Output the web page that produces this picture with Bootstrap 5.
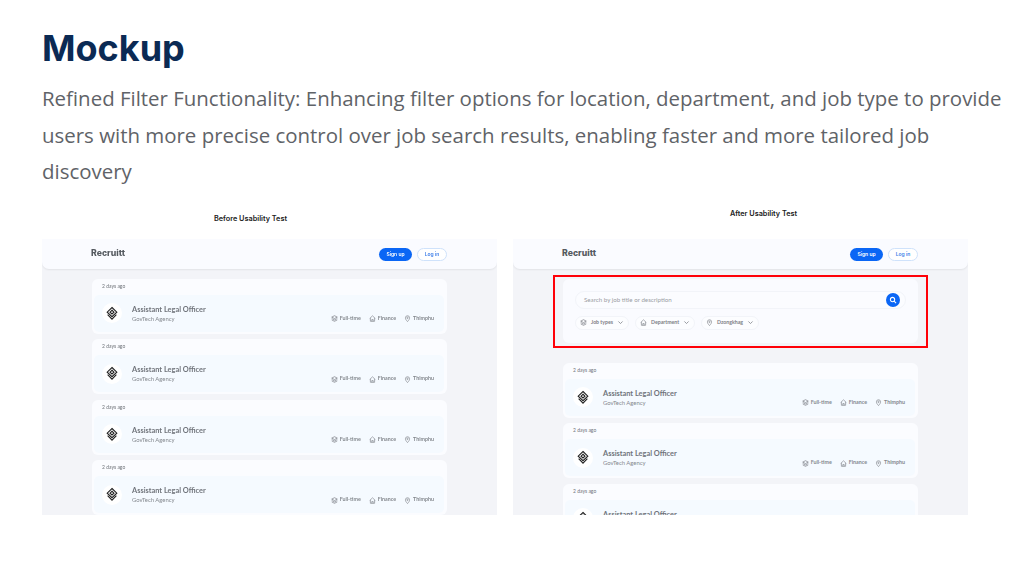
<!DOCTYPE html>
<html lang="en">
<head>
  <meta charset="UTF-8">
  <title>Mockup</title>
  <link href="https://cdn.jsdelivr.net/npm/bootstrap@5.3.3/dist/css/bootstrap.min.css" rel="stylesheet">
  <style>
    body {
      background: #fff;
      padding: 25px 10px 0 42px;
      overflow: hidden;
    }
    .page-title {
      font-family: Inter, sans-serif;
      font-weight: 700;
      font-size: 36px;
      line-height: 46px;
      color: #0b2a54;
      margin: 0 0 9px;
    }
    .page-text {
      font-family: "Open Sans", sans-serif;
      font-size: 20.45px;
      line-height: 36.5px;
      color: #5f6368;
      margin: 0;
    }
    .mock-row {
      gap: 16px;
      width: 926px;
    }
    .mock-col {
      width: 455px;
      font-family: Lato, sans-serif;
    }
    .mock-cap {
      font-family: Inter, sans-serif;
      font-size: 7.3px;
      font-weight: 600;
      color: #222;
      text-align: center;
      line-height: 12px;
    }
    .cap-before { margin-top: 23px; margin-bottom: 14px; padding-right: 38px; }
    .cap-after { margin-top: 18px; margin-bottom: 19px; padding-left: 46px; }
    .mock-panel {
      height: 276px;
      background: #f3f4f8;
      overflow: hidden;
      filter: blur(.35px);
    }
    .mock-nav {
      height: 30px;
      background: #fafbff;
      border-radius: 0 0 7px 7px;
      box-shadow: 0 1px 2px rgba(0, 0, 0, .07);
      padding: 1px 50px 0 49px;
    }
    .mock-brand {
      font-family: Inter, sans-serif;
      font-size: 8.7px;
      font-weight: 800;
      color: #555a60;
    }
    .nav-btns {
      gap: 5px;
    }
    .btn-sign, .btn-log {
      font-family: Inter, sans-serif;
      font-size: 5px;
      font-weight: 600;
      height: 13px;
      border-radius: 7px;
      line-height: 13px;
      text-align: center;
    }
    .btn-sign { width: 33px; background: #0a66f5; color: #fff; }
    .btn-log { width: 30px; background: #fff; color: #3f7fe8; border: 1px solid #cfe2fb; line-height: 11px; }
    .job-list {
      padding: 10px 50px 0;
      gap: 5.5px;
    }
    .after-list { padding-top: 15px; }
    .job-card {
      height: 55px;
      flex: none;
      background: #fbfcff;
      border-radius: 6px;
      padding: 0 3px 2px 2px;
    }
    .job-age {
      font-size: 5px;
      color: #70747a;
      height: 16px;
      line-height: 15px;
      padding-left: 8px;
    }
    .job-body {
      height: 37px;
      background: #f5faff;
      border-radius: 5px;
      padding: 0 10px 0 8px;
    }
    .job-logo {
      width: 20px;
      height: 20px;
      background: #fff;
      border-radius: 50%;
    }
    .job-text {
      padding-left: 10px;
    }
    .job-title {
      font-size: 7.4px;
      font-weight: 700;
      color: #70747b;
      line-height: 9px;
      margin-top: 1px;
    }
    .job-org {
      font-size: 5.9px;
      color: #84888e;
      line-height: 9px;
    }
    .job-metas {
      gap: 8px;
      align-self: flex-end;
      padding-bottom: 9px;
    }
    .job-meta {
      font-size: 5.3px;
      font-weight: 700;
      color: #84888e;
      gap: 2px;
    }
    .red-box {
      margin: 6px 40px 0;
      height: 73px;
      border: 2px solid #ff0008;
      padding: 2px 8px 3px;
    }
    .search-card {
      height: 100%;
      background: #fafbff;
      border-radius: 6px;
      padding: 12px 12px 0;
    }
    .search-bar {
      height: 18px;
      background: #fbfcff;
      border: 1px solid #f2f4f9;
      border-radius: 9px;
      padding: 0 5px 0 8px;
      font-size: 6.2px;
      color: #9a9da3;
    }
    .search-go {
      width: 14px;
      height: 14px;
      background: #0a66f5;
      border-radius: 50%;
    }
    .chip-row {
      gap: 6px;
      margin-top: 7px;
    }
    .filter-chip {
      height: 14px;
      background: #fcfdff;
      border: 1px solid #f2f4f9;
      border-radius: 7px;
      padding: 0 4px;
      font-size: 5.2px;
      font-weight: 700;
      color: #7c8086;
      gap: 4px;
    }
  </style>
</head>
<body>
  <svg width="0" height="0" class="position-absolute">
    <symbol id="ico-logo" viewBox="0 0 14 16">
      <g fill="none" stroke="#222" stroke-width="1.3">
        <path d="M7 1 12.6 6.4 7 11.8 1.4 6.4Z"/>
        <path d="M1.9 9.4 7 14.7 12.1 9.4"/>
        <path d="M7 4.2 9.3 6.4 7 8.6 4.7 6.4Z"/>
      </g>
    </symbol>
    <symbol id="ico-stack" viewBox="0 0 10 10">
      <g fill="none" stroke="#7c8086" stroke-width="1">
        <path d="M5 1 9 3 5 5 1 3Z"/>
        <path d="M1 5 5 7 9 5M1 7 5 9 9 7"/>
      </g>
    </symbol>
    <symbol id="ico-house" viewBox="0 0 10 10">
      <path d="M1 5 5 1.2 9 5M2 4.2V9H8V4.2M4 9V6.5H6V9" fill="none" stroke="#7c8086" stroke-width=".9"/>
    </symbol>
    <symbol id="ico-pin" viewBox="0 0 10 10">
      <g fill="none" stroke="#7c8086" stroke-width=".9">
        <path d="M5 9.4C3.2 7.4 2 5.9 2 4.1A3 3 0 0 1 8 4.1C8 5.9 6.8 7.4 5 9.4Z"/>
        <circle cx="5" cy="4.1" r="1"/>
      </g>
    </symbol>
    <symbol id="ico-down" viewBox="0 0 10 10">
      <path d="M2 3.5 5 6.5 8 3.5" fill="none" stroke="#7c8086" stroke-width="1.1"/>
    </symbol>
    <symbol id="ico-search" viewBox="0 0 10 10">
      <g fill="none" stroke="#fff" stroke-width="1.3">
        <circle cx="4.4" cy="4.4" r="2.7"/>
        <path d="M6.4 6.4 8.8 8.8"/>
      </g>
    </symbol>
  </svg>

  <h1 class="page-title">Mockup</h1>
  <p class="page-text">Refined Filter Functionality: Enhancing filter options for location, department, and job type to provide users with more precise control over job search results, enabling faster and more tailored job discovery</p>

  <div class="d-flex mock-row">
    <div class="mock-col">
      <div class="mock-cap cap-before">Before Usability Test</div>
      <div class="mock-panel">
        <div class="mock-nav d-flex align-items-center justify-content-between">
          <span class="mock-brand">Recruitt</span>
          <div class="nav-btns d-flex align-items-center"><span class="btn-sign">Sign up</span><span class="btn-log">Log in</span></div>
        </div>
        <div class="job-list d-flex flex-column" data-jobs="4"></div>
      </div>
    </div>

    <div class="mock-col">
      <div class="mock-cap cap-after">After Usability Test</div>
      <div class="mock-panel">
        <div class="mock-nav d-flex align-items-center justify-content-between">
          <span class="mock-brand">Recruitt</span>
          <div class="nav-btns d-flex align-items-center"><span class="btn-sign">Sign up</span><span class="btn-log">Log in</span></div>
        </div>
        <div class="red-box">
          <div class="search-card">
            <div class="search-bar d-flex align-items-center justify-content-between">
              <span>Search by job title or description</span>
              <span class="search-go d-flex align-items-center justify-content-center"><svg width="8" height="8"><use href="#ico-search"/></svg></span>
            </div>
            <div class="chip-row d-flex">
              <span class="filter-chip d-flex align-items-center"><svg width="7" height="7"><use href="#ico-stack"/></svg>Job types<svg width="7" height="7"><use href="#ico-down"/></svg></span>
              <span class="filter-chip d-flex align-items-center"><svg width="7" height="7"><use href="#ico-house"/></svg>Department<svg width="7" height="7"><use href="#ico-down"/></svg></span>
              <span class="filter-chip d-flex align-items-center"><svg width="7" height="7"><use href="#ico-pin"/></svg>Dzongkhag<svg width="7" height="7"><use href="#ico-down"/></svg></span>
            </div>
          </div>
        </div>
        <div class="job-list after-list d-flex flex-column" data-jobs="3"></div>
      </div>
    </div>
  </div>

  <script>
    // same job card repeated in both mock lists
    const jobCard = `
      <div class="job-card">
        <div class="job-age">2 days ago</div>
        <div class="job-body d-flex align-items-center">
          <span class="job-logo d-flex align-items-center justify-content-center"><svg width="12" height="15"><use href="#ico-logo"/></svg></span>
          <div class="flex-grow-1 job-text">
            <div class="job-title">Assistant Legal Officer</div>
            <div class="job-org">GovTech Agency</div>
          </div>
          <div class="job-metas d-flex">
            <span class="job-meta d-flex align-items-center"><svg width="7" height="7"><use href="#ico-stack"/></svg>Full-time</span>
            <span class="job-meta d-flex align-items-center"><svg width="7" height="7"><use href="#ico-house"/></svg>Finance</span>
            <span class="job-meta d-flex align-items-center"><svg width="7" height="7"><use href="#ico-pin"/></svg>Thimphu</span>
          </div>
        </div>
      </div>`;
    document.querySelectorAll('[data-jobs]').forEach((list) => {
      list.innerHTML = jobCard.repeat(Number(list.dataset.jobs));
    });
  </script>
  <script src="https://cdn.jsdelivr.net/npm/bootstrap@5.3.3/dist/js/bootstrap.bundle.min.js"></script>
</body>
</html>
